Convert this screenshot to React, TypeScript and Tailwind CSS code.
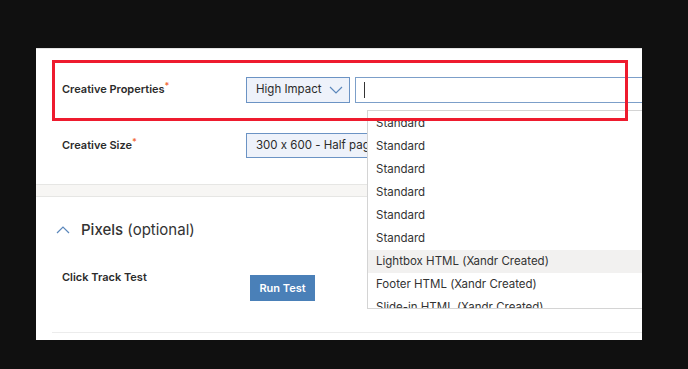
import React from "react";

const font = { fontFamily: "Inter, 'Open Sans', sans-serif" };

const options = [
  "Standard",
  "Standard",
  "Standard",
  "Standard",
  "Standard",
  "Standard",
  "Lightbox HTML (Xandr Created)",
  "Footer HTML (Xandr Created)",
  "Slide-in HTML (Xandr Created)",
];

function Label({ text }: { text: string }) {
  return (
    <div className="w-[184px] shrink-0 pt-[4px] text-[11px] font-semibold leading-[16px] text-[#2b2b2b]">
      {text}
      <span className="relative -top-[4px] text-[9px] text-[#f26b3a]">*</span>
    </div>
  );
}

function Chevron({ up }: { up?: boolean }) {
  return (
    <svg width="14" height="8" viewBox="0 0 14 8" fill="none" className={up ? "rotate-180" : ""}>
      <path d="M1 1l6 6 6-6" stroke="#5b87bb" strokeWidth="1.2" />
    </svg>
  );
}

export default function App() {
  return (
    <div
      className="h-[369px] w-[688px] overflow-hidden bg-[#101010] pl-[36px] pt-[48px] [font-feature-settings:'calt'_0]"
      style={font}
    >
      <div className="relative h-[292px] w-[606px] overflow-hidden border-t border-[#e4e4e4] bg-white">
        {/* form rows */}
        <div className="flex flex-col gap-[30px] pl-[26px] pt-[28px]">
          <div className="flex items-start">
            <Label text="Creative Properties" />
            <div className="flex gap-[5px]">
              <div className="flex h-[26px] w-[104px] items-center gap-[7px] border border-[#6b93c4] bg-[#eef2fa] pl-[9px] text-[11.5px] text-[#2b2b2b]">
                High Impact
                <Chevron />
              </div>
              <div className="flex h-[26px] w-[300px] items-center border border-[#7c9fc9] bg-white pl-[8px]">
                <span className="h-[16px] w-px bg-[#333]" />
              </div>
            </div>
          </div>
          <div className="flex items-start">
            <Label text="Creative Size" />
            <div className="flex h-[25px] w-[200px] items-center border border-[#6b93c4] bg-[#eef2fa] pl-[9px] text-[11.5px] text-[#2b2b2b]">
              300 x 600 - Half page
            </div>
          </div>
        </div>

        {/* band */}
        <div className="mt-[26px] h-[13px] border-y border-[#e6e6e4] bg-[#f7f6f4]" />

        {/* pixels section */}
        <div className="flex items-center gap-[11px] pl-[20px] pt-[23px]">
          <Chevron up />
          <div className="text-[15px] leading-[20px] text-[#333]">
            <span className="font-medium">Pixels</span> (optional)
          </div>
        </div>
        <div className="flex items-start pl-[26px] pt-[29px]">
          <div className="w-[188px] text-[11px] font-semibold leading-[16px] text-[#2b2b2b]">Click Track Test</div>
          <button className="mt-[6px] h-[26px] w-[65px] bg-[#4a80b8] text-[11px] font-semibold text-white">Run Test</button>
        </div>
        <div className="ml-[16px] mt-[31px] border-t border-[#ececec]" />

        {/* open dropdown list */}
        <div className="absolute left-[331px] top-[61px] h-[199px] w-[300px] overflow-hidden border border-[#d4d4d4] bg-white pt-[1px]">
          {options.map((o, i) => (
            <div
              key={i}
              className={`flex h-[23px] items-center pl-[8px] text-[11.5px] text-[#333] ${i === 6 ? "bg-[#f2f1f0]" : ""}`}
            >
              {o}
            </div>
          ))}
        </div>

        {/* red annotation */}
        <div className="absolute left-[16px] top-[11px] h-[61px] w-[576px] border-[3px] border-[#ee1b2e]" />
      </div>
    </div>
  );
}
